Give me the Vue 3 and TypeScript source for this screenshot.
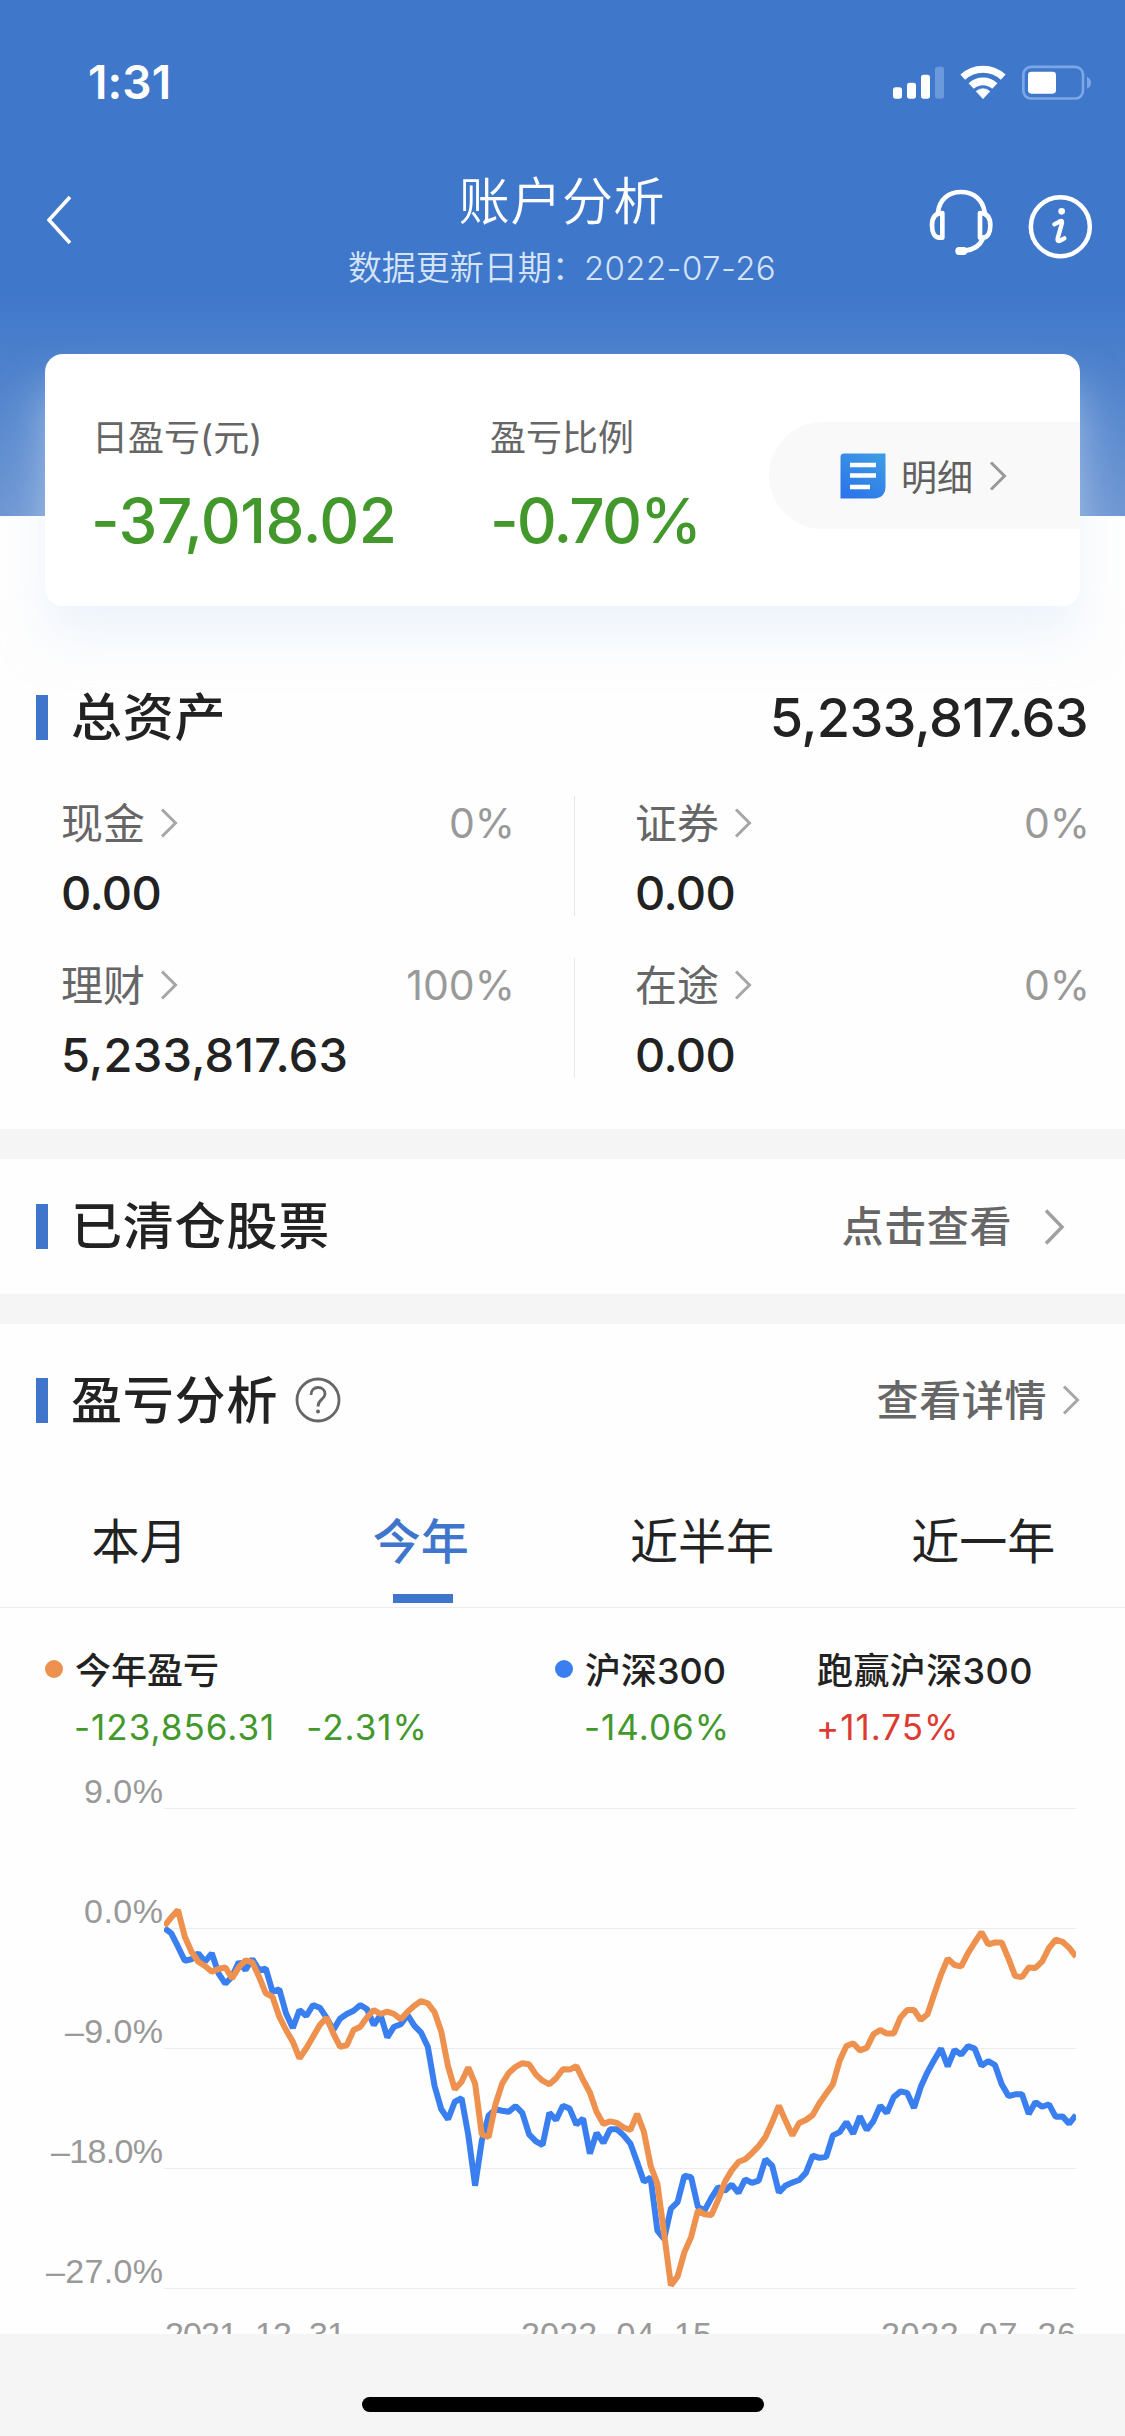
<script setup lang="ts">
interface Holding {
  name: string
  share: string
  amount: string
}

const holdings: Holding[] = [
  { name: '现金', share: '0%', amount: '0.00' },
  { name: '证券', share: '0%', amount: '0.00' },
  { name: '理财', share: '100%', amount: '5,233,817.63' },
  { name: '在途', share: '0%', amount: '0.00' },
]

const tabs: string[] = ['本月', '今年', '近半年', '近一年']
const activeTab = 1

const gridLines = [
  { label: '9.0%', y: 28.5, width: 79 },
  { label: '0.0%', y: 148.5, width: 79 },
  { label: '–9.0%', y: 268.5, width: 98 },
  { label: '–18.0%', y: 388.5, width: 112 },
  { label: '–27.0%', y: 508.5, width: 117 },
]

// One vertical position per trading day, evenly spaced across the plot.
const indexSeries: number[] = [
  148, 153.3, 166.7, 180.7, 179.3, 173.3, 181.7, 173.3, 193.3, 203.7, 196.7, 182, 190, 179, 190, 188.7,
  211.7, 209.3, 233.3, 248, 230, 236, 225, 227.7, 237.7, 250, 238.7, 234, 230.7, 225, 229.3, 245, 235,
  257.3, 246.7, 244.3, 235, 245.7, 252.7, 266.7, 306, 329.3, 339.3, 321.7, 318.3, 355, 405.7, 360.7,
  335.7, 329.3, 330.7, 331.8, 326, 332.9, 354.3, 361.4, 365, 332.9, 340, 325.7, 328.6, 344.6, 338.6,
  373.6, 352.9, 362.9, 349.3, 349.3, 355.4, 363.6, 382.1, 401.8, 397.5, 450.7, 458.9, 428.6, 422.1,
  395.7, 397.1, 426.8, 430.4, 417.9, 407.1, 410.7, 404.6, 412.9, 399.3, 402.9, 400.7, 379.3, 385.7,
  412.5, 405.4, 402.5, 400, 392.9, 375.7, 377.9, 376.8, 355.4, 352.1, 342.1, 353.6, 336.4, 350, 341.1,
  325.7, 332.9, 317.1, 311.4, 312.9, 327.9, 307.1, 292.1, 280, 268.6, 286.4, 270, 274.6, 266.1, 268.6,
  285.7, 281.1, 285, 304.3, 316.1, 314.3, 314.3, 333.9, 322.1, 326.8, 324.3, 336.8, 336.4, 343.6, 335,
]

const accountSeries: number[] = [
  146, 137.3, 130, 156.7, 171.7, 181.7, 186, 191.7, 189, 187.3, 198.3, 187.3, 180.3, 182.3, 196.7,
  213.3, 216.7, 236.7, 250, 261.7, 278.3, 268.3, 256.7, 245, 237.7, 253.3, 266.7, 265.3, 250, 246.7,
  237.3, 230, 234, 231.7, 234, 239.3, 231.7, 225.7, 221, 223.3, 232.3, 251.7, 286.7, 309.3, 301.7,
  287.5, 303.6, 354.3, 357.1, 325, 303.6, 292.9, 286.8, 283.2, 284.3, 294.6, 300.7, 304.3, 298.2,
  289.3, 289.6, 286.1, 300, 312.5, 332.1, 343.9, 341.4, 342.9, 347.5, 350, 333.9, 351.8, 385.7, 403.6,
  453.6, 505.4, 496.4, 472.1, 457.1, 430.4, 434.3, 435, 419.6, 401.8, 390.4, 382.1, 379.3, 373.2,
  366.1, 357.1, 342.1, 325.7, 341.1, 355.4, 342.9, 340, 335, 323.2, 313.6, 304.3, 280.4, 266.1, 263.2,
  270.4, 267.9, 254.3, 250, 253.6, 253.6, 237.5, 230, 230, 240, 234.3, 214.3, 194.6, 178.6, 185,
  186.4, 173.2, 162.5, 152.1, 164.3, 162.5, 162.5, 178.6, 196.1, 197.1, 187.5, 187.9, 181.4, 167.9,
  159.6, 161.8, 167.9, 176.8,
]

const plotLeft = 164.5
const plotRight = 1076

function toPoints(series: number[]): string {
  const step = (plotRight - plotLeft) / (series.length - 1)
  return series.map((y, i) => `${(plotLeft + i * step).toFixed(1)},${y}`).join(' ')
}
</script>

<template>
  <div class="page">
    <header class="hero">
      <div class="status">
        <span class="clock">1:31</span>
        <svg class="status-icons" width="199" height="37" viewBox="99 70 597 111">
          <g fill="#fff">
            <rect x="99" y="140" width="27" height="34" rx="8" />
            <rect x="141" y="126" width="27" height="48" rx="8" />
            <rect x="183" y="102" width="27" height="72" rx="8" />
            <rect x="225" y="78" width="27" height="96" rx="8" fill="#6a9adb" />
            <path d="M369 174 L348.500 152 A30 30 0 0 1 389.500 152 Z" stroke="#fff" stroke-width="2" stroke-linejoin="round" />
            <rect x="504" y="93" width="84" height="66" rx="10" />
          </g>
          <g fill="none" stroke="#fff">
            <path d="M308.300 109.500 A89 89 0 0 1 429.700 109.500" stroke-width="21" />
            <path d="M333.500 136 A52.500 52.500 0 0 1 404.500 136" stroke-width="23" />
          </g>
          <rect x="490" y="78.500" width="179" height="95" rx="23" fill="none" stroke="#7ba8e5" stroke-width="8" />
          <path d="M681 108 Q693 114 693 126 Q693 138 681 144 Z" fill="#7ba8e5" />
        </svg>
      </div>
      <nav class="nav">
        <svg class="back" width="26" height="50" viewBox="0 0 26 50">
          <path d="M23 2 L2 25 L23 48" fill="none" stroke="#fff" stroke-width="3.600" />
        </svg>
        <div class="titles">
          <h1>账户分析</h1>
          <p>数据更新日期：<span>2022-07-26</span></p>
        </div>
        <svg class="nav-icons" width="164" height="72" viewBox="208 444 492 216">
          <g fill="none" stroke="#fff" stroke-width="14" stroke-linecap="round" stroke-linejoin="round">
            <path d="M235 517 C239 479 266 456 304 456 C342 456 370 479 375 517" />
            <path d="M248 519 V593 H240 C225 593 217 578 217 556 C217 533 226 519 248 519 Z" />
            <path d="M361 519 V593 H369 C384 593 392 578 392 556 C392 533 383 519 361 519 Z" />
            <path d="M369 597 C360 618 342 629 316 632" />
          </g>
          <rect x="287" y="621" width="36" height="24" rx="11" fill="#fff" />
          <circle cx="602" cy="560" r="88.500" fill="none" stroke="#fff" stroke-width="13.500" />
          <circle cx="606" cy="514" r="10" fill="#fff" />
          <path d="M584 553 L603 543 Q608 541 607 549 L594 595 Q592 605 599 603 L614 595" fill="none" stroke="#fff" stroke-width="13" stroke-linecap="round" stroke-linejoin="round" />
        </svg>
      </nav>
      <section class="card">
        <div class="metric daily">
          <span class="metric-name">日盈亏(元)</span>
          <strong>-37,018.02</strong>
        </div>
        <div class="metric">
          <span class="metric-name">盈亏比例</span>
          <strong>-0.70%</strong>
        </div>
        <div class="detail">
          <svg width="46" height="46" viewBox="0 0 46 46">
            <defs>
              <linearGradient id="doc" x1="0.800" y1="0" x2="0.200" y2="1">
                <stop offset="0" stop-color="#3d9be4" />
                <stop offset="1" stop-color="#2c74ea" />
              </linearGradient>
            </defs>
            <path d="M4 0.500 H45.500 V34 Q45 45 34 45.500 H0.500 V4 Q0.500 0.500 4 0.500 Z" fill="url(#doc)" />
            <path d="M10 12 H36 M10 22.500 H36 M10 34 H30" stroke="#fff" stroke-width="4.500" />
          </svg>
          <span>明细</span>
          <svg class="detail-arrow" width="18" height="30" viewBox="0 0 18 30">
            <path d="M2 1.500 L15.500 15 L2 28.500" fill="none" stroke="#999" stroke-width="3" />
          </svg>
        </div>
      </section>
    </header>

    <section class="assets">
      <div class="head">
        <i class="bar"></i>
        <h2>总资产</h2>
        <strong class="total">5,233,817.63</strong>
      </div>
      <div class="grid">
        <div v-for="item in holdings" :key="item.name" class="cell">
          <div class="cell-top">
            <span>{{ item.name }}</span>
            <svg width="18" height="30" viewBox="0 0 18 30">
              <path d="M2 1.500 L15.500 15 L2 28.500" fill="none" stroke="#a6a6a6" stroke-width="3" />
            </svg>
            <em>{{ item.share }}</em>
          </div>
          <strong :class="{ long: item.amount.length > 6 }">{{ item.amount }}</strong>
        </div>
      </div>
    </section>

    <section class="head cleared">
      <i class="bar"></i>
      <h2>已清仓股票</h2>
      <span class="link">点击查看</span>
      <svg class="arrow-large" width="22" height="36" viewBox="0 0 22 36">
        <path d="M3 1.500 L19 18 L3 34.500" fill="none" stroke="#a0a0a0" stroke-width="3.500" />
      </svg>
    </section>

    <section class="analysis">
      <div class="head analysis-head">
        <i class="bar"></i>
        <h2>盈亏分析</h2>
        <svg class="help" width="46" height="46" viewBox="0 0 46 46">
          <circle cx="23" cy="23" r="21" fill="none" stroke="#666" stroke-width="2.800" />
          <path d="M16 18 C16 13 19 10.500 23 10.500 C27 10.500 30 13 30 17 C30 22.500 23 22 23 29.500" fill="none" stroke="#666" stroke-width="2.800" />
          <circle cx="23" cy="34.500" r="2" fill="#666" />
        </svg>
        <span class="link">查看详情</span>
        <svg class="arrow-small" width="18" height="30" viewBox="0 0 18 30">
          <path d="M2 1.500 L15.500 15 L2 28.500" fill="none" stroke="#a6a6a6" stroke-width="3" />
        </svg>
      </div>

      <div class="tabs">
        <div v-for="(tab, i) in tabs" :key="tab" class="tab" :class="{ active: i === activeTab }">
          <span>{{ tab }}</span>
        </div>
      </div>

      <div class="legend">
        <div class="entry own">
          <i class="dot orange"></i>
          <div>
            <b>今年盈亏</b>
            <p class="down"><span class="sum">-123,856.31</span><span>-2.31%</span></p>
          </div>
        </div>
        <div class="entry market">
          <i class="dot blue"></i>
          <div>
            <b>沪深300</b>
            <p class="down">-14.06%</p>
          </div>
        </div>
        <div class="entry">
          <div>
            <b class="beat">跑赢沪深300</b>
            <p class="up">+11.75%</p>
          </div>
        </div>
      </div>

      <svg class="chart" width="1125" height="574" viewBox="0 -20 1125 574">
        <defs>
          <clipPath id="plot"><rect x="164" y="0" width="912" height="554" /></clipPath>
        </defs>
        <g v-for="line in gridLines" :key="line.label">
          <line x1="164" x2="1076" :y1="line.y" :y2="line.y" stroke="#ececec" stroke-width="1.200" />
          <text :x="163 - line.width" :y="line.y - 5.500" :textLength="line.width" lengthAdjust="spacing">{{ line.label }}</text>
        </g>
        <text x="165" y="565.500" textLength="181" lengthAdjust="spacing">2021–12–31</text>
        <text x="521" y="565.500" textLength="191" lengthAdjust="spacing">2022–04–15</text>
        <text x="881" y="565.500" textLength="195" lengthAdjust="spacing">2022–07–26</text>
        <g clip-path="url(#plot)" fill="none" stroke-width="6" stroke-linejoin="bevel">
          <polyline :points="toPoints(indexSeries)" stroke="#3a7ff0" />
          <polyline :points="toPoints(accountSeries)" stroke="#ee914e" />
        </g>
      </svg>
    </section>

    <footer class="home"><i></i></footer>
  </div>
</template>

<style>
body {
  margin: 0;
  background: #fff;
}
</style>

<style scoped>
.page {
  width: 1125px;
  height: 2436px;
  overflow: hidden;
  display: flex;
  flex-direction: column;
  background: #fefefe;
  color: #222;
  font-family: Inter, "Noto Sans CJK SC", sans-serif;
}
h1, h2, p {
  margin: 0;
  font-weight: 400;
}
i, em {
  font-style: normal;
}
svg {
  display: block;
  flex: none;
}
.hero {
  height: 606px;
  background: linear-gradient(#3f77cb 0, #3f77cb 290px, #4a7fcc 350px, #6f98d3 516px) no-repeat 0 0 / 100% 516px;
}
.status {
  height: 164px;
  padding: 0 33px 0 88px;
  display: flex;
  align-items: center;
  justify-content: space-between;
}
.clock {
  color: #fff;
  font-size: 46px;
  font-weight: 600;
  letter-spacing: 0.1px;
}
.nav {
  height: 190px;
  box-sizing: border-box;
  padding: 7px 31px 0 47px;
  display: grid;
  grid-template-columns: 148px 1fr 165px;
  align-items: start;
  color: #fff;
}
.back {
  margin-top: 24px;
}
.titles {
  text-align: center;
}
.titles h1 {
  padding-top: 1px;
  font-size: 51px;
  line-height: 60px;
  font-weight: 350;
  letter-spacing: 0.6px;
}
.titles p {
  margin-top: 16px;
  font-size: 34px;
  line-height: 40px;
  font-weight: 350;
  color: #d5e3f7;
  white-space: nowrap;
}
.titles p span {
  margin-left: -2px;
  font-size: 33px;
  letter-spacing: 0.4px;
}
.nav-icons {
  margin-top: 17px;
}
.card {
  margin: 0 45px;
  height: 252px;
  box-sizing: border-box;
  padding-left: 47px;
  display: flex;
  background: #fff;
  border-radius: 18px;
  box-shadow: 0 32px 45px rgba(225, 238, 252, 0.5);
}
.metric {
  padding-top: 64px;
  display: flex;
  flex-direction: column;
}
.daily {
  width: 398px;
}
.metric-name {
  font-size: 36px;
  line-height: 40px;
  color: #666;
}
.metric strong {
  margin-top: 28px;
  font-size: 62px;
  line-height: 70px;
  font-weight: 500;
  color: #42982b;
  letter-spacing: -1.8px;
}
.metric.daily strong {
  margin-left: -1px;
  letter-spacing: -0.5px;
}
.detail {
  margin: 68px 0 0 auto;
  width: 311px;
  height: 107px;
  box-sizing: border-box;
  padding-left: 71px;
  display: flex;
  align-items: center;
  background: #f9f9f9;
  border-radius: 54px 0 0 54px;
  font-size: 36px;
  color: #606060;
}
.detail span {
  margin: -2px 0 0 15px;
}
.detail-arrow {
  margin-left: 16px;
}
.assets {
  height: 457px;
  margin-top: 66px;
}
.head {
  height: 90px;
  padding: 0 37px 0 36px;
  display: flex;
  align-items: center;
}
.bar {
  width: 12px;
  height: 45px;
  background: #3f76cc;
}
h2 {
  margin-left: 23px;
  padding-top: 1px;
  font-size: 51px;
  line-height: 60px;
  font-weight: 500;
  letter-spacing: 0.8px;
}
.total {
  margin-left: auto;
  font-size: 54px;
  font-weight: 500;
  letter-spacing: -0.7px;
}
.grid {
  padding-top: 34px;
  display: grid;
  grid-template-columns: 575px 550px;
  row-gap: 42px;
}
.cell {
  height: 120px;
  box-sizing: border-box;
  padding: 2px 35px 0 60px;
}
.cell:nth-child(odd) {
  padding-left: 61px;
  padding-right: 59px;
  border-right: 1px solid #e8e8e8;
}
.cell-top {
  height: 50px;
  display: flex;
  align-items: center;
  font-size: 42px;
  color: #666;
}
.cell-top span {
  margin-top: -5px;
}
.cell-top svg {
  margin-left: 15px;
}
.cell-top em {
  margin-left: auto;
  font-size: 41px;
  color: #999;
}
.cell strong {
  display: block;
  margin-top: 20px;
  font-size: 47px;
  line-height: 50px;
  font-weight: 500;
  letter-spacing: -0.6px;
}
.cell strong.long {
  letter-spacing: 0.25px;
}
.cleared {
  height: 135px;
  border-top: 30px solid #f5f5f5;
  border-bottom: 30px solid #f5f5f5;
}
.link {
  margin: -6px 0 0 auto;
  font-size: 42px;
  font-weight: 500;
  color: #666;
  letter-spacing: 0.6px;
}
.arrow-large {
  margin: 0 23px 0 31px;
}
.analysis-head {
  height: 152px;
}
.help {
  margin-left: 17px;
}
.arrow-small {
  margin: 0 8px 0 15px;
}
.tabs {
  height: 132px;
  box-sizing: border-box;
  display: flex;
  border-bottom: 1.500px solid #ebebeb;
}
.tab {
  flex: 1;
  padding-top: 36px;
  display: flex;
  flex-direction: column;
  align-items: center;
  font-size: 48px;
  line-height: 60px;
}
.tab span {
  margin-right: 2px;
}
.tab.active {
  color: #3f76cc;
  font-weight: 500;
}
.tab.active::after {
  content: "";
  width: 60px;
  height: 9px;
  margin: 22px 0 0 2px;
  background: #3f76cc;
}
.legend {
  height: 139px;
  padding: 43px 0 0 45px;
  box-sizing: border-box;
  display: flex;
}
.entry {
  display: flex;
  font-size: 36px;
  line-height: 40px;
  white-space: nowrap;
}
.own {
  width: 510px;
}
.market {
  width: 262px;
}
.dot {
  width: 18px;
  height: 18px;
  margin: 9px 12px 0 0;
  border-radius: 50%;
}
.orange {
  background: #ee914e;
}
.blue {
  background: #3a7ff0;
}
.legend b {
  font-weight: 500;
}
.legend .beat {
  letter-spacing: 0.4px;
}
.legend p {
  margin: 16px 0 0 -1px;
  font-size: 35px;
  letter-spacing: 1px;
}
.sum {
  margin-right: 31px;
}
.down {
  color: #42982b;
}
.up {
  color: #dd3a32;
}
.chart {
  margin-top: 13px;
}
.chart text {
  font-family: "Liberation Sans", sans-serif;
  font-size: 34px;
  fill: #999;
}
.home {
  flex: none;
  height: 102px;
  background: #f5f5f5;
  display: flex;
  justify-content: center;
}
.home i {
  width: 402px;
  height: 15px;
  margin-top: 63px;
  border-radius: 8px;
  background: #000;
}
</style>
